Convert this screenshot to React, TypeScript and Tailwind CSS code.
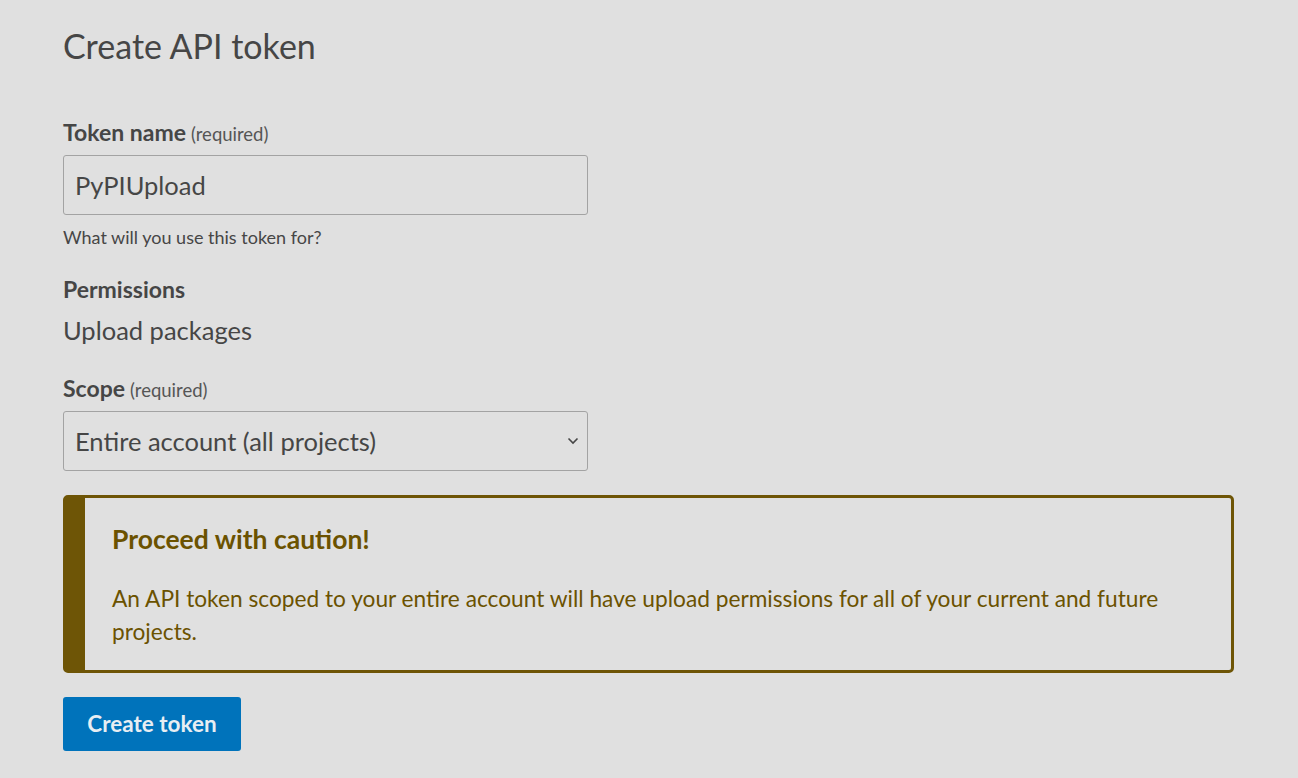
import React from "react";

export default function App() {
  return (
    <div
      className="min-h-screen bg-[#e0e0e0] text-[#464646] px-[63px] pb-10"
      style={{ fontFamily: "Lato, 'Noto Sans', sans-serif" }}
    >
      <h1 className="pt-[26px] text-[34px] leading-[40px] font-normal text-[#464646]">
        Create API token
      </h1>

      <div className="mt-[53px] h-[26px] flex items-baseline gap-[5px] leading-[26px]">
        <span className="font-bold text-[23px]">Token name</span>
        <span className="text-[18.5px] text-[#555]">(required)</span>
      </div>
      <div className="mt-[10px] w-[525px] h-[60px] border border-[#a3a3a3] rounded-[3px] flex items-center px-[11px] text-[25.5px]">
        PyPIUpload
      </div>
      <div className="mt-[12px] text-[18px] leading-[20px]">What will you use this token for?</div>

      <div className="mt-[29px] text-[23px] leading-[26px] font-bold">Permissions</div>
      <div className="mt-[13px] text-[25.5px] leading-[30px]">Upload packages</div>

      <div className="mt-[30px] h-[26px] flex items-baseline gap-[5px] leading-[26px]">
        <span className="font-bold text-[23px]">Scope</span>
        <span className="text-[18.5px] text-[#555]">(required)</span>
      </div>
      <div className="mt-[10px] w-[525px] h-[60px] border border-[#a3a3a3] rounded-[3px] flex items-center justify-between pl-[11px] pr-[8px] text-[25.5px]">
        <span>Entire account (all projects)</span>
        <svg width="12" height="8" viewBox="0 0 12 8" fill="none">
          <path d="M1.5 1.5L6 6L10.5 1.5" stroke="#464646" strokeWidth="1.6" />
        </svg>
      </div>

      <div className="mt-[24px] w-[1171px] border-[3px] border-l-[22px] border-[#6e5506] rounded-[5px] pl-[27px] pr-[60px] pt-[26px] pb-[22px] text-[#6b5200]">
        <div className="text-[26.5px] leading-[30px] font-bold">Proceed with caution!</div>
        <p className="mt-[28px] text-[22.7px] leading-[33px]">
          An API token scoped to your entire account will have upload permissions for all of your current and future projects.
        </p>
      </div>

      <button className="mt-[24px] w-[178px] h-[54px] bg-[#0073bb] rounded-[3px] text-[22.5px] font-bold text-[#e8eef3]">
        Create token
      </button>
    </div>
  );
}
